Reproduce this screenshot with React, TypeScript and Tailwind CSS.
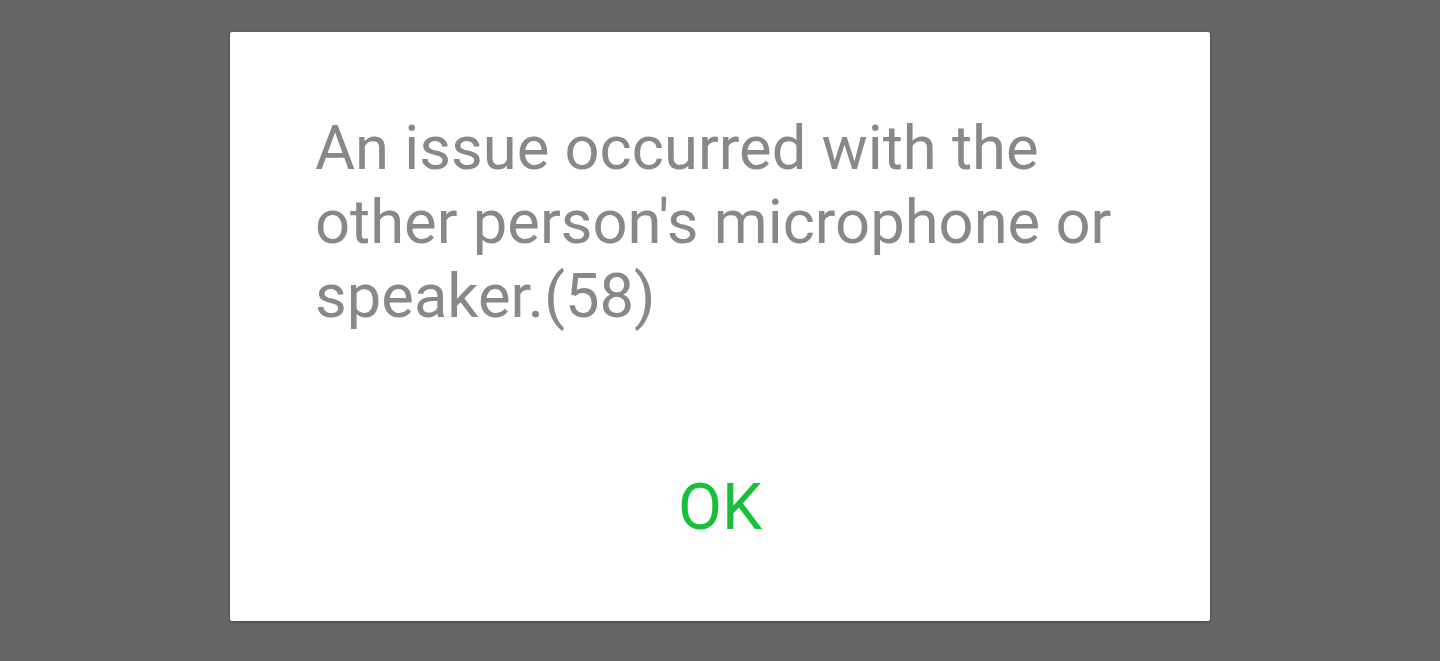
export default function App() {
  return (
    <div className="h-[661px] w-full bg-[#666666] pt-[32px] pl-[230px] font-['Roboto',sans-serif]">
      <div className="flex h-[589px] w-[980px] flex-col rounded-[2px] bg-white shadow-[0_1px_3px_rgba(0,0,0,0.35)]">
        <p className="pt-[79px] pl-[85px] pr-[40px] text-[61.5px] leading-[74px] text-[#888888]">
          An issue occurred with the other person's microphone or speaker.(58)
        </p>
        <div className="mt-auto flex justify-center pb-[83px]">
          <span className="text-[64px] leading-[60px] text-[#19bf3a]">OK</span>
        </div>
      </div>
    </div>
  )
}
